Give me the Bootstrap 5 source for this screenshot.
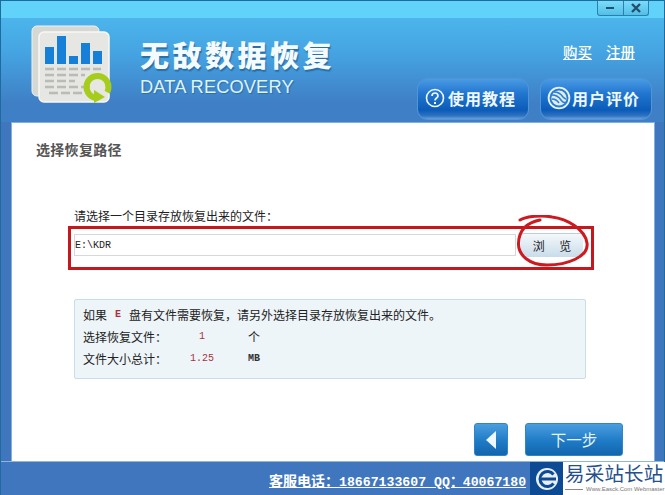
<!DOCTYPE html>
<html lang="zh-CN">
<head>
  <meta charset="UTF-8">
  <meta name="viewport" content="width=device-width, initial-scale=1.0">
  <title>无敌数据恢复</title>
  <link href="https://cdn.jsdelivr.net/npm/bootstrap@5.3.1/dist/css/bootstrap.min.css" rel="stylesheet">
  <style>
    html, body { margin: 0; width: 665px; height: 495px; overflow: hidden; background: #fff; }
    body { font-family: "Noto Sans CJK SC", "Liberation Sans", sans-serif; font-size: 12px; line-height: 1; color: #222; }
    .app-window { width: 665px; height: 495px; background: #3f76bd; border: 1px solid #1f6b9c; border-bottom: 0; position: relative; overflow: hidden; }
    .app-head { height: 121px; background: linear-gradient(#4fbdf0 0, #45a5e2 50px, #3f7fc6 102px); }
    .top-strip { height: 17px; background: #61d3fb; padding-right: 15px; }
    .win-btns { height: 15px; width: 52px; border: 1px solid #2b7fa8; border-top: 0; border-radius: 0 0 3px 3px; background: linear-gradient(#7adcf8, #52bfe8); }
    .win-btn { flex: 1; }
    .win-btn + .win-btn { border-left: 1px solid #2b7fa8; }
    .logo-wrap { width: 139px; padding: 3px 0 0 27px; flex: none; }
    .brand-box { padding-top: 18px; }
    .brand-cn { font-size: 29px; line-height: 36px; font-weight: 900; letter-spacing: 3.5px; color: #f4fbff; text-shadow: 1px 2px 1px #2a6ea8; white-space: nowrap; }
    .brand-en { font: 18.3px/20px "Liberation Sans", sans-serif; color: #dff3fd; margin-top: 5px; text-shadow: 1px 1px 1px #2a6ea8; letter-spacing: .1px; }
    .head-right { margin-left: auto; padding-right: 13px; width: 260px; }
    .head-links { padding-top: 25px; padding-right: 16px; height: 61px; gap: 14px; }
    .head-links a { color: #fff; font-size: 14.5px; line-height: 17px; font-weight: 500; }
    .head-btns { gap: 13px; }
    .tool-btn { width: 110px; height: 40px; border-radius: 10px; border: 0; padding: 0 0 2px 7px; gap: 3px; color: #eef8ff; font-size: 16px; font-weight: 700; letter-spacing: 1px; background: linear-gradient(#4a9be4 0, #2377d0 35%, #0b5cb8 78%, #2f72c2 92%, #6d9fd8 100%); box-shadow: 0 0 0 1px #4f96d8; white-space: nowrap; }
    .tool-rate { padding-left: 6px; gap: 1px; }
    .main-panel { margin: 0 9px 0 10px; height: 339px; background: #fff; border: 1px solid #7fb0de; border-bottom: 0; padding: 18px 0 0 24px; position: relative; }
    .step-title { font-size: 14px; line-height: 17px; font-weight: 700; color: #555; letter-spacing: .3px; }
    .path-label { margin: 50px 0 0 38px; line-height: 16px; letter-spacing: 0; }
    .path-frame { margin: 2px 0 0 32px; width: 526px; height: 44px; border: 3px solid #c5181c; padding: 5px 3px 0 3px; gap: 5px; }
    .path-input.form-control { width: 442px; height: 22px; border: 1px solid #d5d8de; border-radius: 0; padding: 1px 0 0 0; font: 10px/12px "Liberation Mono", monospace; color: #222; box-shadow: none; align-self: flex-start; }
    .browse-btn { width: 62px; height: 24px; border: 0; border-top: 1px solid #b9cfe0; border-radius: 3px; padding: 0; margin-top: -1px; font-size: 12px; color: #222; word-spacing: 4.5px; background: linear-gradient(#f4f8fb, #c9dcea); white-space: pre; }
    .scribble { position: absolute; left: 505px; top: 92px; pointer-events: none; }
    .info-box { margin: 29px 0 0 38px; width: 512px; height: 80px; background: #eef5f9; border: 1px solid #c8dde6; border-radius: 2px; padding: 7px 0 0 8px; gap: 6px; }
    .info-line { height: 16px; line-height: 16px; }
    .info-key { width: 90px; }
    .info-num { width: 58px; text-align: center; }
    .info-unit { margin-left: 17px; }
    .mono-red { font: 10px/16px "Liberation Mono", monospace; color: #a8323c; }
    .mono-dark { font: bold 10px/16px "Liberation Mono", monospace; color: #333; }
    .nav-row { margin: 44px 0 0 438px; gap: 17px; }
    .nav-btn { height: 33px; border-radius: 3px; border: 1px solid #2e86c8; padding: 0; color: #e4f3fc; font-size: 15.5px; letter-spacing: 0; background: linear-gradient(#4a9ede, #1f7bc6 55%, #1266ad); }
    .nav-back { width: 34px; }
    .nav-next { width: 98px; }
    .app-foot { height: 34px; background: #3f76bd; border-top: 1px solid #8fb6e0; padding-left: 268px; overflow: hidden; }
    .foot-text { color: #fff; font-size: 14px; font-weight: 700; line-height: 17px; padding-top: 10px; white-space: nowrap; width: 261px; overflow: hidden; flex: none; text-decoration: underline; }
    .foot-text span { font: bold 13.2px/17px "Liberation Mono", monospace; }
    .site-mark { position: absolute; left: 530px; top: 462px; width: 135px; height: 33px; background: #fff; }
    .site-icon { width: 33px; height: 33px; background: #0d4a94; flex: none; }
    .site-name { padding-left: 2px; color: #24508c; }
    .site-cn { font-size: 19.5px; line-height: 21px; letter-spacing: .2px; font-weight: 400; white-space: nowrap; }
    .site-sub { margin-top: 3px; gap: 3px; }
    .site-rule { width: 18px; height: 1px; background: #888; flex: none; }
    .site-en { font: 6px/7px "Liberation Sans", sans-serif; color: #777; white-space: nowrap; }
  </style>
</head>
<body>
  <div class="app-window">
    <!-- 顶部 -->
    <div class="app-head">
      <div class="top-strip d-flex justify-content-end">
        <div class="win-btns d-flex">
          <div class="win-btn d-flex align-items-center justify-content-center">
            <svg width="10" height="10" viewBox="0 0 10 10"><path d="M1 5h8" stroke="#24506e" stroke-width="2"/></svg>
          </div>
          <div class="win-btn d-flex align-items-center justify-content-center">
            <svg width="10" height="10" viewBox="0 0 10 10"><path d="M1 1l8 8M9 1l-8 8" stroke="#24506e" stroke-width="2.4"/></svg>
          </div>
        </div>
      </div>
      <div class="d-flex">
        <div class="logo-wrap">
          <svg width="86" height="84" viewBox="0 0 86 84">
            <rect x="4" y="5" width="67" height="70" rx="5" fill="#d6d8d4" stroke="#f2f2f0"/>
            <rect x="11" y="11" width="70" height="70" rx="5" fill="#e6e6e2" stroke="#f7f7f5" stroke-width="1.5"/>
            <g fill="#1680d8">
              <rect x="17" y="26" width="9" height="17"/>
              <rect x="29" y="15" width="9" height="28"/>
              <rect x="41" y="35" width="9" height="8"/>
              <rect x="53" y="22" width="9" height="21"/>
              <rect x="65" y="30" width="9" height="13"/>
            </g>
            <g stroke="#b9bbb8" stroke-width="2.5" stroke-dasharray="9 3">
              <path d="M17 48h56"/><path d="M17 54h40"/><path d="M17 60h30"/><path d="M17 66h46"/><path d="M21 72h36"/>
            </g>
            <circle cx="69.5" cy="66" r="11" fill="none" stroke="#a6cc1c" stroke-width="6" stroke-dasharray="56 13" transform="rotate(95 69.5 66)"/>
            <path d="M66 69l11 7-11 6z" fill="#a6cc1c"/>
          </svg>
        </div>
        <div class="brand-box">
          <div class="brand-cn">无敌数据恢复</div>
          <div class="brand-en">DATA RECOVERY</div>
        </div>
        <div class="head-right">
          <div class="head-links d-flex justify-content-end">
            <a href="#">购买</a>
            <a href="#">注册</a>
          </div>
          <div class="head-btns d-flex justify-content-end">
            <button class="tool-btn btn d-flex align-items-center">
              <svg width="20" height="20" viewBox="0 0 20 20" class="flex-none">
                <circle cx="10" cy="10" r="8.5" fill="none" stroke="#eef8ff" stroke-width="1.6"/>
                <path d="M7 8c0-4 6-4 6 0 0 2-3 2-3 4.5" fill="none" stroke="#eef8ff" stroke-width="1.7"/>
                <rect x="9" y="14" width="2" height="2" fill="#eef8ff"/>
              </svg>
              使用教程
            </button>
            <button class="tool-btn tool-rate btn d-flex align-items-center">
              <svg width="24" height="24" viewBox="0 0 24 24" class="flex-none">
                <circle cx="12" cy="12" r="10.4" fill="#2a7ccf" stroke="#e6f3ff" stroke-width="1.8"/>
                <circle cx="12" cy="12" r="7.6" fill="#dcecf8"/>
                <path d="M5 9c4 0 7 2 9 5s4 3 5 2M7 6c4 0 7 2 9 5 1 1 2 2 3 2M5 13c3 0 5 1 7 4" fill="none" stroke="#2a7ccf" stroke-width="1.5"/>
              </svg>
              用户评价
            </button>
          </div>
        </div>
      </div>
    </div>

    <!-- 内容 -->
    <div class="main-panel">
      <div class="step-title">选择恢复路径</div>
      <div class="path-label">请选择一个目录存放恢复出来的文件：</div>
      <div class="path-frame d-flex">
        <input class="path-input form-control" type="text" value="E:\KDR">
        <button class="browse-btn btn">浏  览</button>
      </div>
      <svg class="scribble" width="76" height="56" viewBox="0 0 76 56">
        <path d="M3 5C10 1 25 0 35 2C50 4 68 14 70 28C72 42 50 50 30 50C12 50 1 40 1.500 28C2 16 8 8 23 5" fill="none" stroke="#cc1a20" stroke-width="3" stroke-linecap="round"/>
      </svg>
      <div class="info-box d-flex flex-column">
        <div class="info-line d-flex">如果<span class="mono-red fw-bold px-2">E</span>盘有文件需要恢复，请另外选择目录存放恢复出来的文件。</div>
        <div class="info-line d-flex"><span class="info-key">选择恢复文件：</span><span class="info-num mono-red">1</span><span class="info-unit">个</span></div>
        <div class="info-line d-flex"><span class="info-key">文件大小总计：</span><span class="info-num mono-red">1.25</span><span class="info-unit mono-dark">MB</span></div>
      </div>
      <div class="nav-row d-flex">
        <button class="nav-btn nav-back btn d-flex align-items-center justify-content-center">
          <svg width="12" height="18" viewBox="0 0 12 18"><path d="M11 0v18L1 9z" fill="#eef7fd"/></svg>
        </button>
        <button class="nav-btn nav-next btn">下一步</button>
      </div>
    </div>

    <!-- 底部 -->
    <div class="app-foot d-flex">
      <div class="foot-text">客服电话：<span>18667133607 QQ：40067180</span></div>
    </div>
  </div>

  <!-- 角标 -->
  <div class="site-mark d-flex">
    <div class="site-icon d-flex align-items-center justify-content-center">
      <svg width="26" height="26" viewBox="0 0 26 26">
        <circle cx="13" cy="13" r="11" fill="#e8eef6"/>
        <path d="M19.500 8.500a7.500 7.500 0 1 0 0 9" fill="none" stroke="#0d4a94" stroke-width="3"/>
        <path d="M6 13h16" stroke="#0d4a94" stroke-width="3"/>
      </svg>
    </div>
    <div class="site-name">
      <div class="site-cn">易采站长站</div>
      <div class="site-sub d-flex align-items-center">
        <span class="site-rule"></span>
        <span class="site-en">Www.Easck.Com Webmaster</span>
      </div>
    </div>
  </div>
  <script src="https://cdn.jsdelivr.net/npm/bootstrap@5.3.1/dist/js/bootstrap.bundle.min.js"></script>
</body>
</html>
